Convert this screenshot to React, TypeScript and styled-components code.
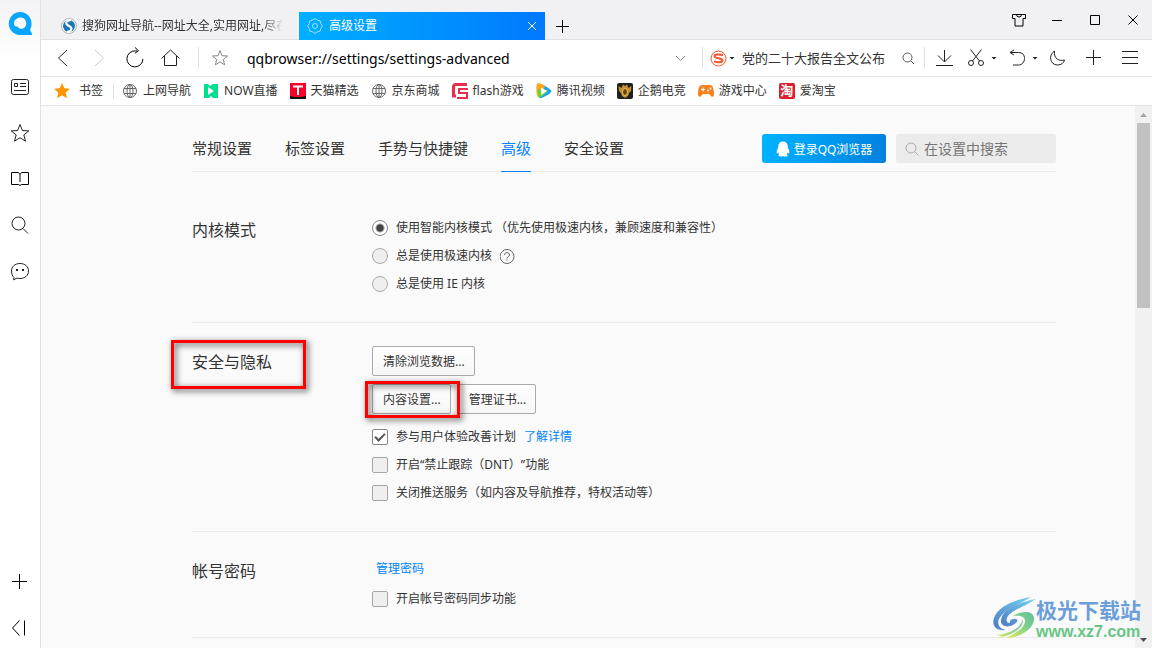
import React from "react";
import styled, { createGlobalStyle } from "styled-components";

const Global = createGlobalStyle`
  *, *::before, *::after { box-sizing: border-box; }
  html, body { margin: 0; padding: 0; }
  body, button, input {
    font-family: "Noto Sans", "Noto Sans CJK SC", sans-serif;
    font-size: 12px;
    color: #333;
    text-spacing-trim: space-all;
  }
  button { border: 0; padding: 0; background: none; }
  h2 { margin: 0; font-weight: 400; }
`;

/* ---------- shared ---------- */

const Svg = styled.svg`
  display: block;
  flex: none;
  fill: none;
  stroke: currentColor;
  stroke-width: 1;
`;

const IconButton = styled.button<{ $tone?: string }>`
  display: flex;
  flex: none;
  align-items: center;
  justify-content: center;
  width: 24px;
  height: 24px;
  color: ${(p) => p.$tone ?? "#222"};
`;

const Caret = styled.button`
  flex: none;
  width: 6px;
  height: 3px;
  background: #222;
  clip-path: polygon(0 0, 100% 0, 50% 100%);
`;

const Divider = styled.span<{ $height: number }>`
  flex: none;
  width: 1px;
  height: ${(p) => p.$height}px;
  background: #e1e1e1;
`;

/* ---------- window ---------- */

const Window = styled.div`
  position: relative;
  display: flex;
  height: 100vh;
  overflow: hidden;
  background: #fff;
`;

const Sidebar = styled.aside`
  display: flex;
  flex: none;
  flex-direction: column;
  justify-content: space-between;
  width: 41px;
  padding: 11px 8px 8px;
  border-right: 1px solid #e0e0e0;
  background: linear-gradient(#f3f3f5, #fff 60px);
`;

const SideGroup = styled.div`
  display: flex;
  flex-direction: column;
  gap: 22px;
`;

const Logo = styled.button`
  width: 24px;
  height: 24px;
  margin-bottom: 18px;
`;

const Main = styled.div`
  display: flex;
  flex: 1;
  flex-direction: column;
  min-width: 0;
`;

/* ---------- title bar ---------- */

const TitleBar = styled.header`
  display: flex;
  flex: none;
  align-items: flex-end;
  height: 40px;
  padding: 0 7px 0 11px;
  background: #f1f1f3;
  box-shadow: inset 0 -1px #e0e0e0;
`;

const Tab = styled.button<{ $active?: boolean }>`
  display: flex;
  flex: 0 1 246px;
  align-items: center;
  gap: ${(p) => (p.$active ? 6 : 5)}px;
  min-width: 0;
  height: 28px;
  padding: 0 5px 0 ${(p) => (p.$active ? 8 : 9)}px;
  margin-right: ${(p) => (p.$active ? 6 : 1)}px;
  color: ${(p) => (p.$active ? "#fff" : "#333")};
  background: ${(p) => (p.$active ? "linear-gradient(90deg, #00b0ff, #0078ff)" : "none")};
`;

const TabLabel = styled.span<{ $fade?: boolean }>`
  flex: 1;
  overflow: hidden;
  margin-right: ${(p) => (p.$fade ? 10 : 0)}px;
  line-height: 18px;
  text-align: left;
  white-space: nowrap;
  mask-image: ${(p) => (p.$fade ? "linear-gradient(90deg, #000 90%, transparent)" : "none")};
`;

const WindowControls = styled.div`
  display: flex;
  gap: 14px;
  align-self: flex-start;
  margin: 8px 0 0 auto;
`;

/* ---------- toolbar ---------- */

const Toolbar = styled.div`
  display: flex;
  flex: none;
  align-items: center;
  height: 37px;
  padding: 0 10px;
  border-bottom: 1px solid #e3e3e3;
`;

const NavButtons = styled.div`
  display: flex;
  gap: 12px;
  margin-right: 15px;
`;

const Address = styled.input`
  flex: 1;
  min-width: 0;
  height: 28px;
  padding: 0;
  border: 0;
  outline: 0;
  background: none;
  color: #000;
  font-size: 14px;
`;

const StarSlot = styled.div`
  margin: 0 15px 0 9px;
`;

const SearchBox = styled.div`
  display: flex;
  align-items: center;
  width: 222px;
  padding-right: 4px;
  margin-left: 10px;
`;

const SearchInput = styled.input`
  flex: 1;
  min-width: 0;
  height: 24px;
  margin-left: 7px;
  padding: 0 0 2px;
  border: 0;
  outline: 0;
  background: none;
  font-size: 13px;
`;

const Engine = styled.button`
  width: 17px;
  height: 17px;
  margin: 0 2px 0 7px;
`;

const Tools = styled.div`
  display: flex;
  align-items: center;
  gap: 8px;
  margin-left: 7px;
`;

const ToolGroup = styled.div`
  display: flex;
  align-items: center;
  gap: 3px;
`;

const ToolEnd = styled.div`
  display: flex;
  gap: 12px;
`;

/* ---------- bookmarks ---------- */

const Bookmarks = styled.nav`
  display: flex;
  flex: none;
  align-items: center;
  gap: 12px;
  height: 29px;
  padding-left: 13px;
  border-bottom: 1px solid #e3e3e3;
`;

const BookmarkHome = styled.a`
  display: flex;
  align-items: center;
  gap: 9px;
  padding-right: 10px;
  margin-right: -4px;
  border-right: 1px solid #e1e1e1;
  color: #333;
  line-height: 16px;
  text-decoration: none;
`;

const Bookmark = styled.a`
  display: flex;
  align-items: center;
  gap: 5px;
  color: #333;
  line-height: 18px;
  text-decoration: none;
  white-space: nowrap;
`;

/* ---------- page ---------- */

const Page = styled.div`
  display: flex;
  flex: 1;
  min-height: 0;
  background: #fafafa;
`;

const Content = styled.main`
  flex: 1;
  min-width: 0;
  padding: 0 79px 0 151px;
  overflow: hidden;
`;

const SettingsNav = styled.nav`
  display: flex;
  align-items: flex-end;
  height: 66px;
  margin-bottom: 19px;
  box-shadow: inset 0 -1px #ebebeb;
`;

const NavList = styled.div`
  display: flex;
  flex: 1;
  gap: 33px;
`;

const NavLink = styled.a<{ $active?: boolean }>`
  height: 36px;
  border-bottom: 1px solid ${(p) => (p.$active ? "#0084ff" : "transparent")};
  color: ${(p) => (p.$active ? "#0084ff" : "#333")};
  font-size: 15px;
  line-height: 24px;
  text-decoration: none;
  white-space: nowrap;
`;

const Login = styled.button`
  display: flex;
  align-items: center;
  justify-content: center;
  gap: 4px;
  width: 124px;
  height: 29px;
  margin: 0 10px 9px 0;
  border-radius: 3px;
  background: linear-gradient(100deg, #00b4ff, #0080e0);
  color: #fff;
  white-space: nowrap;
`;

const FindBox = styled.label`
  display: flex;
  align-items: center;
  gap: 4px;
  width: 160px;
  height: 29px;
  margin-bottom: 9px;
  padding: 0 8px;
  border-radius: 3px;
  background: #ebebeb;
  color: #aaa;
`;

const FindInput = styled.input`
  width: 100%;
  min-width: 0;
  padding: 0;
  border: 0;
  outline: 0;
  background: none;
  font-size: 14px;
  &::placeholder { color: #757575; }
`;

const Section = styled.section`
  display: grid;
  grid-template-columns: 180px 1fr;
  padding: 23px 0 24px;
  border-bottom: 1px solid #ebebeb;
`;

const Title = styled.h2`
  position: relative;
  justify-self: start;
  align-self: start;
  margin-top: 4px;
  font-size: 16px;
  line-height: 24px;
`;

const Options = styled.div`
  display: flex;
  flex-direction: column;
`;

const Option = styled.div`
  display: flex;
  align-items: center;
  gap: 8px;
  height: 28px;
`;

const OptionLabel = styled.label`
  display: flex;
  align-items: center;
  gap: 8px;
  line-height: 18px;
  white-space: pre;
`;

const TextLink = styled.a<{ $block?: boolean }>`
  margin: ${(p) => (p.$block ? "0 0 2px 4px" : "0")};
  color: #0084ff;
  line-height: ${(p) => (p.$block ? 28 : 18)}px;
  text-decoration: none;
`;

const Radio = styled.input`
  appearance: none;
  width: 16px;
  height: 16px;
  margin: 0;
  border: 1px solid #aaa;
  border-radius: 50%;
  background: #efefef;
  &:checked {
    border-color: #888;
    background: radial-gradient(circle, #444 3px, #fff 5px);
  }
`;

const Check = styled.input`
  appearance: none;
  width: 16px;
  height: 16px;
  margin: 0;
  border: 1px solid #a6a6a6;
  border-radius: 2px;
  background: #efefef;
  &:checked {
    border-color: #888;
    background: #fff;
  }
  &:checked::after {
    content: "";
    display: block;
    width: 10px;
    height: 6px;
    margin: 3px 0 0 2px;
    border: solid #555;
    border-width: 0 0 2px 2px;
    transform: rotate(-45deg);
  }
`;

const ButtonRow = styled.div`
  display: flex;
  gap: 7px;
  margin-bottom: 8px;
  & + & { margin-bottom: 9px; }
`;

const PushButton = styled.button`
  height: 30px;
  padding: 0 9px 0 10px;
  border: 1px solid #aaa;
  border-radius: 2px;
  background: linear-gradient(#fff, #f6f6f6);
  white-space: nowrap;
`;

const Marked = styled.span`
  position: relative;
  z-index: 1;
  display: block;
`;

const Frame = styled.span<{ $inset: string }>`
  position: absolute;
  inset: ${(p) => p.$inset};
  border: 3px solid #f00;
  filter: drop-shadow(2px 2px 3px rgba(0, 0, 0, 0.75));
  pointer-events: none;
`;

/* ---------- scroll bar and watermark ---------- */

const ScrollTrack = styled.div`
  display: flex;
  flex: none;
  flex-direction: column;
  align-items: center;
  width: 17px;
  padding: 7px 0 6px;
  background: #f1f1f1;
`;

const ScrollArrow = styled.button<{ $down?: boolean }>`
  width: 7px;
  height: 4px;
  margin-top: ${(p) => (p.$down ? "auto" : "0")};
  background: ${(p) => (p.$down ? "#505050" : "#a3a3a3")};
  clip-path: ${(p) =>
    p.$down ? "polygon(0 0, 100% 0, 50% 100%)" : "polygon(50% 0, 100% 100%, 0 100%)"};
`;

const ScrollThumb = styled.div`
  width: 13px;
  height: 35%;
  margin-top: 6px;
  background: #c1c1c1;
`;

const Watermark = styled.div`
  position: absolute;
  right: 11px;
  bottom: 7px;
  display: flex;
  align-items: center;
  pointer-events: none;
`;

const WatermarkText = styled.div`
  display: flex;
  flex-direction: column;
`;

const WatermarkName = styled.span`
  color: #6c9fd9;
  font: 700 21px/28px "Noto Sans CJK SC", sans-serif;
`;

const WatermarkUrl = styled.span`
  color: #66c684;
  font: 700 16px/18px "Liberation Sans", sans-serif;
`;

/* ---------- drawings ---------- */

type IconProps = { d: string; size?: number };
const Line = ({ d, size = 24 }: IconProps) => (
  <Svg width={size} height={size} viewBox={`0 0 ${size} ${size}`}>
    <path d={d} />
  </Svg>
);

const circle = (cx: number, cy: number, r: number) =>
  `M${cx - r} ${cy}a${r} ${r} 0 1 0 ${2 * r} 0a${r} ${r} 0 1 0 ${-2 * r} 0`;

const D = {
  star: "M12 3.500l2.400 6 6.400.4-5 4 1.700 6.300L12 16.700l-5.500 3.500 1.700-6.300-5-4 6.400-.4z",
  smallStar: "M12 4.500l2 5.200 5.500.3-4.300 3.500 1.500 5.400-4.700-3-4.700 3 1.500-5.400L4.500 10l5.500-.3z",
  news: "M5.500 4.500h13a2 2 0 0 1 2 2v11a2 2 0 0 1-2 2h-13a2 2 0 0 1-2-2v-11a2 2 0 0 1 2-2zM6.500 8.500h3v3h-3zM12 8.500h6M12 11.500h6M6 15.500h12",
  book: "M12 7.500L10.500 5.500h-7v12h7l1.500 1 1.500-1h7v-12h-7zM12 7.500v7.500",
  search: circle(10.5, 10.5, 6.5) + "M15 15.500l5 5",
  chat: "M6 18.500c-1.500-1.200-2.500-3.500-2.500-6.500 0-4.500 3.500-7.500 8.500-7.500s8.500 3.200 8.500 7.500-3.500 7.500-8.500 7.500c-1 0-2-.1-3-.4L5.500 20.800zM8 10.500h2M8 11.500h2M14 10.500h2M14 11.500h2",
  plus: "M4 11.500h15M11.500 4v15",
  collapse: "M11.500 4.500l-7 7.500 7 7.500M16.500 4.500v15",
  back: "M16 4l-8.500 8 8.500 8",
  forward: "M8 4l8.500 8-8.500 8",
  reload: "M14 4.900h-1.500a8 8 0 1 0 7.400 8M12 1.500l3.500 3.200-3.500 2.500",
  home: "M2.500 12.500L11.500 4l9 8.500M5.500 10v9.500h12V10",
  chevron: "M8 10l4.500 4.500L17 10",
  smallSearch: circle(11.5, 11.5, 4.5) + "M15 15l3 3",
  download: "M12.500 4v12M6 9.500l6.500 6.500 6.500-6.500M4 19.500h17",
  cut: "M6.500 3.500l9 11.500M17.500 3.500l-9 11.500" + circle(7, 17, 2.5) + circle(17, 17, 2.5),
  undo: "M5 6.500h8.500c4 0 6 2.500 6 6s-2.500 6.500-6 6.500H8M9 4L5 6.500 9 9",
  moon: "M8.500 5c-6.500 4-4.500 14 3 14 3.500 0 6.500-2 7-5-5 1.500-11-1-10-9z",
  menu: "M4 5.500h16M4 11.500h16M4 17.500h16",
  shirt: "M5.500 6.500h13v4h-2.500v7.500H8V10.500H5.500zM9.500 6.500a2.500 2.500 0 0 0 5 0",
  minus: "M7 12.500h10",
  square: "M7.500 7.500h9v9h-9z",
  close: "M7.500 7.500l9 9M16.500 7.500l-9 9",
  tabClose: "M4 4l8 8M12 4l-8 8",
  newTab: "M5 10.500h13M11.500 4v13",
  find: circle(7, 7, 5) + "M10.500 10.500l4 4",
};

const Globe = () => (
  <Svg width="16" height="16" viewBox="0 0 16 16" color="#666">
    <circle cx="8" cy="8" r="6.500" />
    <ellipse cx="8" cy="8" rx="3" ry="6.500" />
    <path d="M8 1.500v13M2 5.500h12M2 10.500h12" />
  </Svg>
);

const NowIcon = () => (
  <Svg width="16" height="16" viewBox="0 0 16 16">
    <path fill="#00df8e" stroke="none" d="M1 1h4l2 2 3-2h5v14h-5l-2-2-2 2H1z" />
    <path fill="#fff" stroke="none" d="M5 4l6 4-6 4z" />
  </Svg>
);

const TmallIcon = () => (
  <Svg width="16" height="16" viewBox="0 0 16 16">
    <path fill="#f8002c" stroke="none" d="M0 0h16v16H0z" />
    <path fill="#111" stroke="none" d="M0 13c2 0 3 1 4 1h8c1 0 2-1 4-1v3H0z" />
    <path stroke="#fff" style={{ strokeWidth: 2 }} d="M3 3.500h10M8 3.500V12" />
  </Svg>
);

const FlashIcon = () => (
  <Svg width="16" height="16" viewBox="0 0 16 16">
    <path stroke="#e72f50" style={{ strokeWidth: 3 }} d="M15 1.500H3.500a2 2 0 0 0-2 2V13H4" />
    <path stroke="#e72f50" style={{ strokeWidth: 2 }} d="M16 6H7v4h8v5H5" />
  </Svg>
);

const VideoIcon = () => (
  <Svg width="16" height="16" viewBox="0 0 16 16">
    <path fill="#15a4f5" stroke="none" d="M1 1c3-2 14 5 14.500 7C15 11 5 16 3 15z" />
    <path fill="#ffa51c" stroke="none" d="M1 1c2-2 6 1 8 2L5 13 2 14C0 11 0 4 1 1z" />
    <path fill="#6ed22d" stroke="none" d="M2 6l10 1c0 2-7 7-9 8C2 13 1 9 2 6z" />
    <path fill="#fff" stroke="none" d="M5 4.500L11 8l-6 4z" />
  </Svg>
);

const ESportIcon = () => (
  <Svg width="16" height="16" viewBox="0 0 16 16">
    <rect width="16" height="16" rx="2" fill="#202022" stroke="none" />
    <path fill="#c18f35" stroke="none" d="M1.500 3l3 2L6 1.500 8 3l2-1.500L11.500 5l3-2-.5 5-2 2-1 3-3 2-3-2-1-3-2-2z" />
    <ellipse cx="8" cy="9" rx="2.500" ry="3.500" fill="#6b4310" stroke="#f0c35d" />
  </Svg>
);

const GameIcon = () => (
  <Svg width="16" height="16" viewBox="0 0 16 16">
    <path fill="#f7821b" stroke="none" d="M4 2h8c3 0 4 4 4 9 0 3-2 4-4 1l-1-1H5l-1 1c-2 3-4 2-4-1 0-5 1-9 4-9z" />
    <path stroke="#fff" d="M3 6.500h4M5 4.500v4" />
    <circle cx="10" cy="7.500" r="1" fill="#fff" stroke="none" />
    <circle cx="12.500" cy="5.500" r="1" fill="#fff" stroke="none" />
  </Svg>
);

const TaoBox = styled.span`
  width: 16px;
  height: 16px;
  border-radius: 2px;
  background: #d9202c;
  color: #fff;
  font-size: 13px;
  font-weight: 700;
  line-height: 15px;
  text-align: center;
`;

const BrowserLogo = () => (
  <Svg width="24" height="24" viewBox="0 0 24 24">
    <path
      fill="#0aa5ff"
      stroke="none"
      fillRule="evenodd"
      d="M12.500 1a11.500 11.500 0 0 1 11 11.500c0 3-.5 4.500-1.500 6.500l2 3.500a1.200 1.200 0 0 1-1 1.500H12A11.500 11.500 0 1 1 12.500 1zM13 6.500c-4 0-7 2.500-7 6 0 2 1.500 3.500 3.500 3 1.500 3 6 3 7.500.5 2.500-3 1-9.500-4-9.500z"
    />
  </Svg>
);

const SogouTab = () => (
  <Svg width="16" height="16" viewBox="0 0 16 16">
    <circle cx="8" cy="8" r="7.500" fill="#fff" stroke="#aab4bd" />
    <circle cx="8" cy="8" r="6" fill="#1b76b8" stroke="none" />
    <path stroke="#fff" style={{ strokeWidth: 2 }} d="M10 2C4 3 4 6 8 8s3 5-2 6" />
  </Svg>
);

const SogouSearch = () => (
  <Svg width="17" height="17" viewBox="0 0 17 17">
    <circle cx="8.500" cy="8.500" r="7.500" stroke="#f4542a" />
    <path
      stroke="#f4542a"
      style={{ strokeWidth: 2 }}
      d="M13 5.200c-3-1-8.500-1.200-8.500 1.100 0 2.500 8 1.500 8 4.200 0 2.300-5.500 2-8.500.9"
    />
  </Svg>
);

const Gear = () => (
  <Svg width="16" height="16" viewBox="0 0 16 16" color="#a5e0ff">
    <path d="M8 .5l2.200 1.600 2.900.8.800 2.900L15.500 8l-1.600 2.200-.8 2.900-2.900.8L8 15.500l-2.200-1.600-2.900-.8-.8-2.900L.5 8l1.600-2.200.8-2.900 2.900-.8z" />
    <circle cx="8" cy="8" r="2.500" />
  </Svg>
);

const Penguin = () => (
  <Svg width="14" height="16" viewBox="0 0 14 16">
    <path
      fill="#fff"
      stroke="none"
      d="M7 .5c3 0 4.800 2 4.800 5 0 1.200.3 1.700.8 2.700.8 1.600 1 3.800.5 4.200-.5.200-1-.5-1.300-.9-.2.900-.5 1.400-1 1.900.8.300 1 .8.800 1.300-.4 1-3.600.9-4.600.2-1 .7-4.200.8-4.600-.2-.2-.5 0-1 .8-1.300-.5-.5-.8-1-1-1.900-.3.400-.8 1.100-1.300.9-.5-.4-.3-2.600.5-4.200.5-1 .8-1.500.8-2.700 0-3 1.800-5 4.800-5z"
    />
  </Svg>
);

const Help = () => (
  <Svg width="15" height="16" viewBox="0 0 15 16" color="#666">
    <circle cx="7" cy="8.500" r="7" />
    <path d="M4.500 7c0-3.200 5-3.200 5 0 0 1.500-2.500 1.700-2.500 3.500M7 11.500v1.200" />
  </Svg>
);

const Swirl = () => (
  <Svg width="43" height="42" viewBox="0 0 43 42">
    <defs>
      <linearGradient id="blue" x1="0" y1="1" x2="1" y2="0">
        <stop offset="0" stopColor="#4f7cc0" />
        <stop offset="1" stopColor="#74d2f5" />
      </linearGradient>
      <linearGradient id="green" x1="0" y1="1" x2="1" y2="0">
        <stop offset="0" stopColor="#e8ea5a" />
        <stop offset="0.600" stopColor="#7bcf8f" />
        <stop offset="1" stopColor="#63be92" />
      </linearGradient>
    </defs>
    <path fill="url(#blue)" stroke="none" d="M38 0C24 2 5 9 1 21c-3 9 4 13 12 12-7-1-9-6-7-11C10 13 27 7 38 0z" />
    <path fill="url(#blue)" stroke="none" d="M43 2C27 5 9 12 8 23c-1 6 6 8 12 5 4-2 6-5 3-6-3-1-7 1-6 4-3 0-4-2-3-5C16 14 31 10 43 2z" />
    <path fill="url(#green)" stroke="none" d="M20 19c8-5 20-6 21 2 1 10-14 20-28 20 10-5 20-11 19-18-1-4-6-5-12-4z" />
    <path fill="url(#green)" stroke="none" d="M29 22c1 9-14 15-26 16l6 1-5 2c14-2 29-11 25-19z" />
  </Svg>
);

/* ---------- data ---------- */

const bookmarks: [string, React.ReactNode][] = [
  ["上网导航", <Globe />],
  ["NOW直播", <NowIcon />],
  ["天猫精选", <TmallIcon />],
  ["京东商城", <Globe />],
  ["flash游戏", <FlashIcon />],
  ["腾讯视频", <VideoIcon />],
  ["企鹅电竞", <ESportIcon />],
  ["游戏中心", <GameIcon />],
  ["爱淘宝", <TaoBox>淘</TaoBox>],
];

const pages = ["常规设置", "标签设置", "手势与快捷键", "高级", "安全设置"];

export default function App() {
  return (
    <>
      <Global />
      <Window>
        <Sidebar>
          <SideGroup>
            <Logo aria-label="QQ"><BrowserLogo /></Logo>
            <IconButton><Line d={D.news} /></IconButton>
            <IconButton><Line d={D.star} /></IconButton>
            <IconButton $tone="#000"><Line d={D.book} /></IconButton>
            <IconButton><Line d={D.search} /></IconButton>
            <IconButton><Line d={D.chat} /></IconButton>
          </SideGroup>
          <SideGroup>
            <IconButton $tone="#000"><Line d={D.plus} /></IconButton>
            <IconButton $tone="#000"><Line d={D.collapse} /></IconButton>
          </SideGroup>
        </Sidebar>

        <Main>
          <TitleBar>
            <Tab>
              <SogouTab />
              <TabLabel $fade>搜狗网址导航--网址大全,实用网址,尽在</TabLabel>
            </Tab>
            <Tab $active>
              <Gear />
              <TabLabel>高级设置</TabLabel>
              <Line d={D.tabClose} size={16} />
            </Tab>
            <IconButton $tone="#000"><Line d={D.newTab} /></IconButton>
            <WindowControls>
              <IconButton $tone="#000"><Line d={D.shirt} /></IconButton>
              <IconButton $tone="#000"><Line d={D.minus} /></IconButton>
              <IconButton $tone="#000"><Line d={D.square} /></IconButton>
              <IconButton $tone="#000"><Line d={D.close} /></IconButton>
            </WindowControls>
          </TitleBar>

          <Toolbar>
            <NavButtons>
              <IconButton><Line d={D.back} /></IconButton>
              <IconButton $tone="#ccc"><Line d={D.forward} /></IconButton>
              <IconButton $tone="#000"><Line d={D.reload} /></IconButton>
              <IconButton><Line d={D.home} /></IconButton>
            </NavButtons>
            <Divider $height={22} />
            <StarSlot><IconButton $tone="#888"><Line d={D.smallStar} /></IconButton></StarSlot>
            <Address aria-label="地址" defaultValue="qqbrowser://settings/settings-advanced" />
            <IconButton $tone="#888"><Line d={D.chevron} /></IconButton>
            <SearchBox>
              <Divider $height={22} />
              <Engine aria-label="搜狗"><SogouSearch /></Engine>
              <Caret />
              <SearchInput aria-label="搜索" defaultValue="党的二十大报告全文公布" />
              <IconButton $tone="#555"><Line d={D.smallSearch} /></IconButton>
            </SearchBox>
            <Divider $height={22} />
            <Tools>
              <IconButton><Line d={D.download} /></IconButton>
              <ToolGroup><IconButton><Line d={D.cut} /></IconButton><Caret /></ToolGroup>
              <ToolGroup><IconButton><Line d={D.undo} /></IconButton><Caret /></ToolGroup>
              <ToolEnd>
                <IconButton><Line d={D.moon} /></IconButton>
                <IconButton><Line d={D.plus} /></IconButton>
                <IconButton><Line d={D.menu} /></IconButton>
              </ToolEnd>
            </Tools>
          </Toolbar>

          <Bookmarks>
            <BookmarkHome href="#">
              <Svg width="16" height="16" viewBox="0 0 16 16">
                <path fill="#ff9500" stroke="none" d="M8 0l2.300 5.300 5.700.5-4.300 3.800 1.300 5.700L8 12.300l-5 3 1.300-5.700L0 5.800l5.700-.5z" />
              </Svg>
              书签
            </BookmarkHome>
            {bookmarks.map(([name, icon]) => (
              <Bookmark href="#" key={name}>{icon}{name}</Bookmark>
            ))}
          </Bookmarks>

          <Page>
            <Content>
              <SettingsNav>
                <NavList>
                  {pages.map((p) => (
                    <NavLink href="#" key={p} $active={p === "高级"}>{p}</NavLink>
                  ))}
                </NavList>
                <Login><Penguin />登录QQ浏览器</Login>
                <FindBox>
                  <Line d={D.find} size={16} />
                  <FindInput aria-label="在设置中搜索" placeholder="在设置中搜索" />
                </FindBox>
              </SettingsNav>

              <Section>
                <Title>内核模式</Title>
                <Options>
                  <Option>
                    <OptionLabel><Radio type="radio" name="core" defaultChecked />使用智能内核模式 （优先使用极速内核，兼顾速度和兼容性）</OptionLabel>
                  </Option>
                  <Option>
                    <OptionLabel><Radio type="radio" name="core" />总是使用极速内核</OptionLabel>
                    <Help />
                  </Option>
                  <Option>
                    <OptionLabel><Radio type="radio" name="core" />总是使用 IE 内核</OptionLabel>
                  </Option>
                </Options>
              </Section>

              <Section>
                <Title>安全与隐私<Frame $inset="-10px -34px -15px -21px" /></Title>
                <Options>
                  <ButtonRow><PushButton>清除浏览数据...</PushButton></ButtonRow>
                  <ButtonRow>
                    <Marked>
                      <PushButton>内容设置...</PushButton>
                      <Frame $inset="-3px -9px -4px -7px" />
                    </Marked>
                    <PushButton>管理证书...</PushButton>
                  </ButtonRow>
                  <Option>
                    <OptionLabel><Check type="checkbox" defaultChecked />参与用户体验改善计划</OptionLabel>
                    <TextLink href="#">了解详情</TextLink>
                  </Option>
                  <Option>
                    <OptionLabel><Check type="checkbox" />开启“禁止跟踪（DNT）”功能</OptionLabel>
                  </Option>
                  <Option>
                    <OptionLabel><Check type="checkbox" />关闭推送服务（如内容及导航推荐，特权活动等）</OptionLabel>
                  </Option>
                </Options>
              </Section>

              <Section>
                <Title>帐号密码</Title>
                <Options>
                  <TextLink href="#" $block>管理密码</TextLink>
                  <Option>
                    <OptionLabel><Check type="checkbox" />开启帐号密码同步功能</OptionLabel>
                  </Option>
                </Options>
              </Section>
            </Content>
            <ScrollTrack>
              <ScrollArrow />
              <ScrollThumb />
              <ScrollArrow $down />
            </ScrollTrack>
          </Page>
        </Main>

        <Watermark>
          <Swirl />
          <WatermarkText>
            <WatermarkName>极光下载站</WatermarkName>
            <WatermarkUrl>www.xz7.com</WatermarkUrl>
          </WatermarkText>
        </Watermark>
      </Window>
    </>
  );
}
